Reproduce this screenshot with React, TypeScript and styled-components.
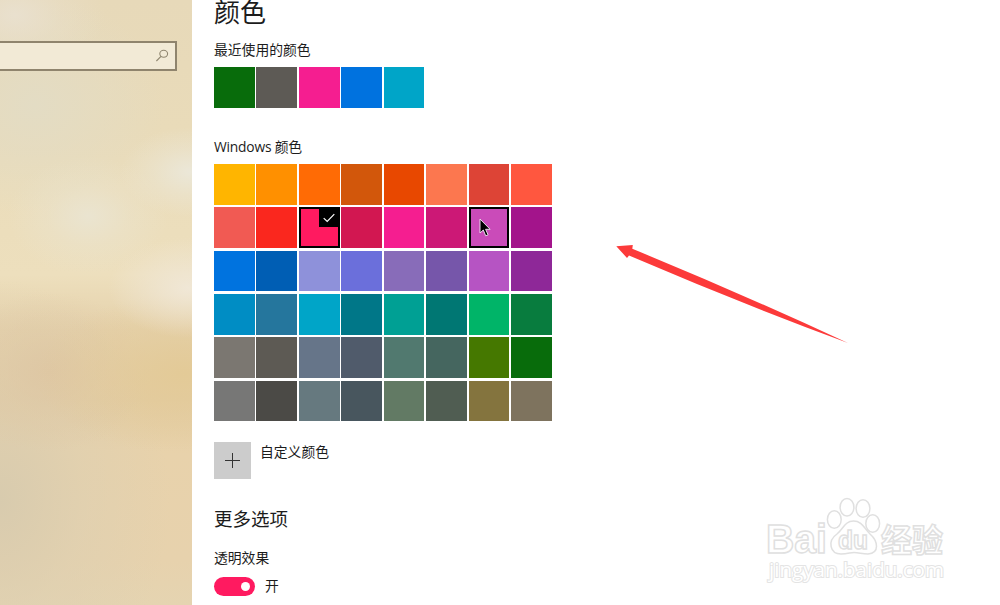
import { createGlobalStyle, styled } from 'styled-components';

const RECENT_COLORS = ['#086c0b', '#5d5a55', '#f51e90', '#0072df', '#00a5c8'];

const WINDOWS_COLORS = [
  ['#ffb500', '#ff9000', '#ff6b05', '#d2570b', '#e84800', '#fc774f', '#dd4436', '#ff573f'],
  ['#f15a53', '#fa271e', '#ff1a60', '#d21751', '#f51e90', '#cc1876', '#ca4bb9', '#a3148b'],
  ['#0073df', '#005eb4', '#8e91da', '#6b6fdb', '#886cb9', '#7656aa', '#b654c3', '#8e2898'],
  ['#008dc4', '#25769d', '#00a5c8', '#007788', '#00a094', '#007773', '#00b468', '#087c3e'],
  ['#7b7771', '#5d5a54', '#667589', '#505b6b', '#51796f', '#45665f', '#457800', '#086c0b'],
  ['#777776', '#4b4a46', '#66797f', '#48565e', '#627a64', '#505d52', '#84743e', '#7e735e'],
];

const ACCENT_COLOR = '#ff1a60';
const HOVERED_COLOR = '#ca4bb9';

const App = () => {
  return (
    <Page>
      <GlobalStyle />
      <Sidebar>
        <SearchBox>
          <SearchIcon viewBox="0 0 14 14">
            <ellipse cx="8.7" cy="4.8" rx="3.9" ry="3.5" />
            <path d="M6 7.4 1.4 12" />
          </SearchIcon>
        </SearchBox>
      </Sidebar>
      <Content>
        <Title>颜色</Title>
        <RecentLabel>最近使用的颜色</RecentLabel>
        <SwatchGrid $columns={5}>
          {RECENT_COLORS.map((color) => (
            <Swatch key={color} $color={color} />
          ))}
        </SwatchGrid>
        <WindowsLabel>Windows 颜色</WindowsLabel>
        <SwatchGrid $columns={8}>
          {WINDOWS_COLORS.flat().map((color) => (
            <Swatch
              key={color}
              $color={color}
              $outlined={color === ACCENT_COLOR || color === HOVERED_COLOR}
            >
              {color === ACCENT_COLOR && (
                <CheckBadge>
                  <svg width="12" height="10" viewBox="0 0 12 10">
                    <path d="M.7 5.1 4.2 8.5 11.3 1.2" />
                  </svg>
                </CheckBadge>
              )}
              {color === HOVERED_COLOR && (
                <Cursor viewBox="0 0 12 19">
                  <path d="M1 1v14l3.3-3 2.4 5.8 2.4-1-2.5-5.5h4.5Z" />
                </Cursor>
              )}
            </Swatch>
          ))}
        </SwatchGrid>
        <CustomRow>
          <AddButton>
            <svg width="15" height="15" viewBox="0 0 15 15">
              <path d="M7.5 0v15M0 7.5h15" />
            </svg>
          </AddButton>
          <Label>自定义颜色</Label>
        </CustomRow>
        <Heading>更多选项</Heading>
        <TransparencyLabel>透明效果</TransparencyLabel>
        <ToggleRow>
          <Toggle>
            <Knob />
          </Toggle>
          <Label>开</Label>
        </ToggleRow>
      </Content>
      <Arrow viewBox="0 0 240 105">
        <path d="M1.3 1.2 17.8 0 17.3 3.8Q125 48 233 98Q120 56 14 10.5L12 13Z" />
      </Arrow>
      <Watermark viewBox="0 0 190 90">
        <BrandText x="1" y="57" fontSize="40" textLength="61" lengthAdjust="spacingAndGlyphs">
          Bai
        </BrandText>
        <g>
          <ellipse cx="69.3" cy="23.5" rx="6.9" ry="8.8" />
          <ellipse cx="82" cy="11.3" rx="6.9" ry="8.8" />
          <ellipse cx="98" cy="12.5" rx="6.9" ry="8.8" />
          <ellipse cx="107.7" cy="27.5" rx="6.9" ry="8.8" />
          <path d="M88.5 25C80 25 78 33 72 38C62 45 65 58 76 58C83 58 85 56.5 89 56.5C94 56.5 97 58 103 58C115 57 113 45 105 38C99 32 97 25 88.5 25Z" />
        </g>
        <BrandText x="73" y="53" fontSize="26" textLength="30" lengthAdjust="spacingAndGlyphs">
          du
        </BrandText>
        <BrandText x="116" y="56" fontSize="32" textLength="62" lengthAdjust="spacingAndGlyphs">
          经验
        </BrandText>
        <UrlText x="4" y="80.5" fontSize="20" textLength="175" lengthAdjust="spacingAndGlyphs">
          jingyan.baidu.com
        </UrlText>
      </Watermark>
    </Page>
  );
};

export default App;

const GlobalStyle = createGlobalStyle`
  * {
    box-sizing: border-box;
  }
  body {
    margin: 0;
    overflow: hidden;
    background: #fff;
    color: #1c1c1c;
    font-family: 'Open Sans', 'Noto Sans CJK SC', sans-serif;
  }
`;

const Page = styled.div`
  position: relative;
  display: flex;
  width: 1000px;
  height: 605px;
  overflow: hidden;
`;

const Sidebar = styled.aside`
  width: 192px;
  flex-shrink: 0;
  padding-top: 41px;
  background:
    radial-gradient(ellipse 70px 45px at 190px 172px, #ebe7d8, #ebe7d870 50%, #ebe7d800),
    radial-gradient(ellipse 80px 50px at 188px 288px, #f0e7d6, #f0e7d680 50%, #f0e7d600),
    radial-gradient(ellipse 80px 60px at 88px 216px, #eae4d0, #eae4d060 50%, #eae4d000),
    radial-gradient(ellipse 90px 60px at 15px 15px, #e9e0ce, #e9e0ce60 50%, #e9e0ce00),
    radial-gradient(ellipse 130px 110px at 35px 105px, #e3dcc4, #e3dcc480 50%, #e3dcc400),
    radial-gradient(ellipse 150px 80px at 185px 374px, #e3ca97, #e3ca9770 50%, #e3ca9700),
    radial-gradient(ellipse 100px 80px at 50px 372px, #dec7a4, #dec7a460 50%, #dec7a400),
    radial-gradient(ellipse 170px 220px at 0px 500px, #d8cbae, #dccfb280 50%, #dccfb200),
    linear-gradient(
      #e7d9b9 0,
      #e9dbb9 130px,
      #ebddbb 190px,
      #eddfbd 275px,
      #e5d1ab 330px,
      #e3cca3 400px,
      #e8d2ab 450px,
      #e7d2ad 560px,
      #e5d4b1 605px
    );
`;

const SearchBox = styled.div`
  display: flex;
  align-items: center;
  justify-content: flex-end;
  width: 177px;
  height: 30px;
  padding-right: 6px;
  border: 2px solid #8f846d;
  border-left: 0;
  background: #f2ead6;
`;

const SearchIcon = styled.svg`
  width: 14px;
  height: 14px;
  fill: none;
  stroke: #8f866f;
  stroke-width: 1.1;
`;

const Content = styled.main`
  padding-left: 22px;
`;

const Title = styled.h1`
  margin: 0;
  font-size: 26px;
  font-weight: 400;
  line-height: 24px;
`;

const Label = styled.div`
  font-size: 13.8px;
  line-height: 20px;
`;

const RecentLabel = styled(Label)`
  margin: 16px 0 7.3px;
`;

const WindowsLabel = styled(Label)`
  margin: 29px 0 7.2px;
  letter-spacing: -0.2px;
`;

const TransparencyLabel = styled(Label)`
  margin: 16px 0 8px;
`;

const SwatchGrid = styled.div<{ $columns: number }>`
  display: grid;
  grid-template-columns: repeat(${({ $columns }) => $columns}, 40.7px);
  grid-auto-rows: 40.7px;
  gap: 2.6px 1.75px;
`;

const Swatch = styled.div<{ $color: string; $outlined?: boolean }>`
  position: relative;
  background: ${({ $color }) => $color};
  border: ${({ $outlined }) => ($outlined ? '2px solid #000' : 'none')};
`;

const CheckBadge = styled.div`
  position: absolute;
  top: -1px;
  right: -1px;
  display: flex;
  align-items: center;
  justify-content: center;
  width: 20px;
  height: 19px;
  background: #000;
  svg {
    fill: none;
    stroke: #fff;
    stroke-width: 1.2;
  }
`;

const Cursor = styled.svg`
  position: absolute;
  top: 9px;
  left: 8px;
  width: 12px;
  height: 19px;
  fill: #000;
  stroke: #e8d8e8;
  stroke-width: 1;
`;

const CustomRow = styled.div`
  display: flex;
  gap: 9px;
  margin-top: 20.3px;
`;

const AddButton = styled.button`
  display: flex;
  align-items: center;
  justify-content: center;
  width: 37px;
  height: 37px;
  padding: 0;
  border: 0;
  background: #ccc;
  svg {
    stroke: #333;
    stroke-width: 1;
  }
`;

const Heading = styled.h2`
  margin: 27.5px 0 0;
  font-size: 18.5px;
  font-weight: 400;
  line-height: 26px;
`;

const ToggleRow = styled.div`
  display: flex;
  align-items: center;
  gap: 10px;
  height: 20px;
`;

const Toggle = styled.div`
  display: flex;
  align-items: center;
  justify-content: flex-end;
  width: 41px;
  height: 19px;
  padding-right: 5px;
  border-radius: 10px;
  background: ${ACCENT_COLOR};
`;

const Knob = styled.div`
  width: 9px;
  height: 9px;
  border-radius: 50%;
  background: #fff;
`;

const Arrow = styled.svg`
  position: absolute;
  top: 245px;
  left: 615px;
  width: 240px;
  height: 105px;
  fill: #fc3a3a;
`;

const Watermark = styled.svg`
  position: absolute;
  top: 496px;
  left: 765px;
  width: 190px;
  height: 90px;
  fill: #fff;
  stroke: #e0e0e0;
  stroke-width: 1.5;
`;

const BrandText = styled.text`
  font-family: 'Liberation Sans', 'Noto Sans CJK SC', sans-serif;
  font-weight: 700;
`;

const UrlText = styled.text`
  font-family: 'Open Sans', sans-serif;
  font-weight: 400;
  stroke: #e4e4e4;
  stroke-width: 2;
  paint-order: stroke;
`;
